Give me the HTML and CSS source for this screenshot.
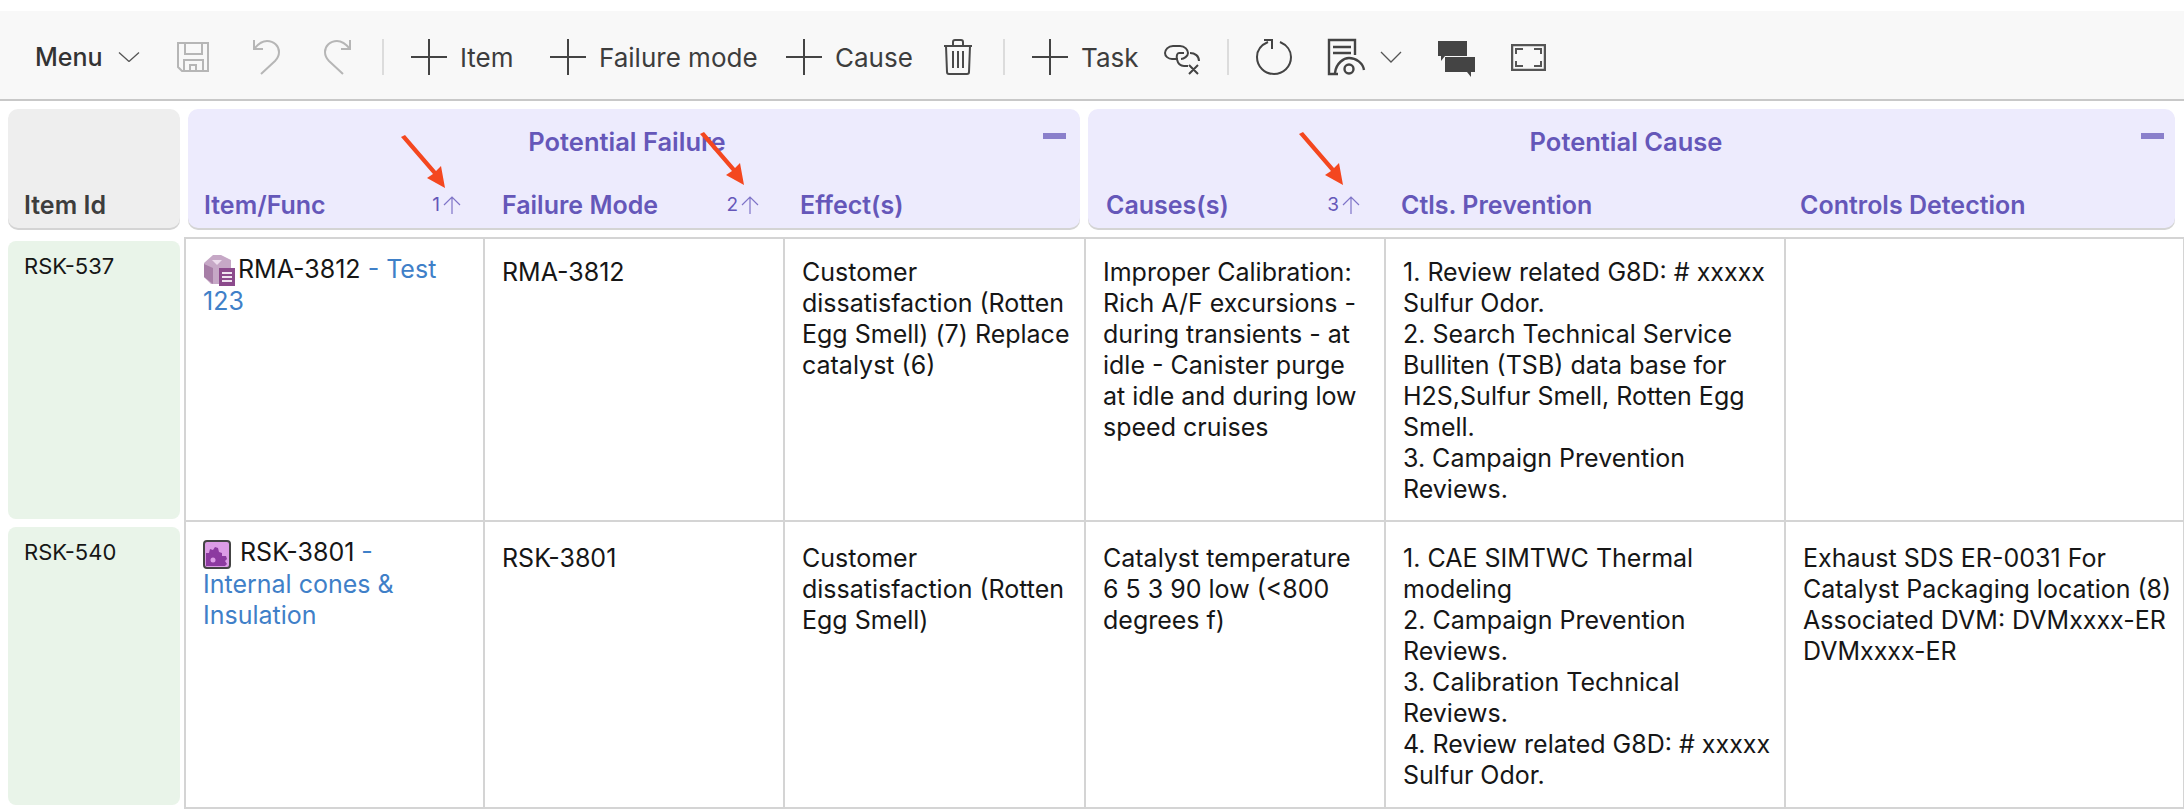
FILE: index.html
```html
<!DOCTYPE html>
<html lang="en">
<head>
<meta charset="utf-8">
<title>Risk analysis</title>
<link rel="stylesheet" href="styles.css">
</head>
<body>
<div class="toolbar">
  <div class="tb w-menu"><span class="tb-menu">Menu</span><svg class="chev chev-menu" viewBox="0 0 22 10"><path d="M1 0.5 11 9.5 21 0.5"/></svg></div>
  <div class="tb w-save"><svg class="ic-save" viewBox="0 0 32 30"><path d="M1 1H31V29H5L1 25Z M8 1V12H25V1 M7 29V18H26V29 M13 29V23H19V29"/></svg></div>
  <div class="tb w-undo"><svg class="ic-hook" viewBox="0 0 28 36"><path d="M2 1V10H11 M2 10C6 5 10 2 15 2C22 2 27 7 27 13C27 17 25 20 23 22L9 35"/></svg></div>
  <div class="tb w-redo"><svg class="ic-hook" viewBox="0 0 28 36"><path d="M26 1V10H17 M26 10C22 5 18 2 13 2C6 2 1 7 1 13C1 17 3 20 5 22L19 35"/></svg></div>
  <div class="tb w-sep"><span class="sep"></span></div>
  <div class="tb w-item"><svg class="ic-plus" viewBox="0 0 36 36"><path d="M18 0V36M0 18H36"/></svg><span class="tb-label">Item</span></div>
  <div class="tb w-failure"><svg class="ic-plus" viewBox="0 0 36 36"><path d="M18 0V36M0 18H36"/></svg><span class="tb-label">Failure mode</span></div>
  <div class="tb w-cause"><svg class="ic-plus" viewBox="0 0 36 36"><path d="M18 0V36M0 18H36"/></svg><span class="tb-label">Cause</span></div>
  <div class="tb w-trash"><svg class="ic-trash" viewBox="0 0 30 36"><path d="M1 7H29 M10 7V3Q10 1 12 1H18Q20 1 20 3V7 M3 7 4 33Q4 35 6 35H24Q26 35 26 33L27 7 M10 12V29 M15 12V29 M20 12V29"/></svg></div>
  <div class="tb w-sep"><span class="sep"></span></div>
  <div class="tb w-task"><svg class="ic-plus" viewBox="0 0 36 36"><path d="M18 0V36M0 18H36"/></svg><span class="tb-label">Task</span></div>
  <div class="tb w-link"><svg class="ic-link" viewBox="0 0 36 30"><path d="M14 14H8C4 14 1 11 1 8S4 1 9 1H16C21 1 24 5 24 8S20 14 17 14 M20 8H15C11 8 12 21 20 21H24 M26 8C31 8 35 11 35 16 M25 20 34 29 M34 20 25 29"/></svg></div>
  <div class="tb w-sep"><span class="sep"></span></div>
  <div class="tb w-refresh"><svg class="ic-plus ic-refresh" viewBox="0 0 36 36"><path d="M24 3C31 6 35 12 35 18C35 28 27 35 18 35S1 28 1 18C1 11 5 6 12 3 M8 1H17 M16 1V10"/></svg></div>
  <div class="tb w-report"><svg class="ic-plus ic-report" viewBox="0 0 36 36"><path d="M10 35H1V1H27V16 M5 8H23 M5 14H23"/><path d="M7 34C8 24 16 19 21 19C28 19 35 24 36 31"/><circle cx="21" cy="30" r="4.500"/></svg><svg class="chev chev-report" viewBox="0 0 22 12"><path d="M1 1 11 11 21 1"/></svg></div>
  <div class="tb w-comments"><svg class="ic-comments" viewBox="0 0 37 32"><path d="M0 0H29V15H7L3 20V15H0Z"/><path d="M7 16H37V31H33V36L29 31H7Z"/></svg></div>
  <div class="tb"><svg class="ic-full" viewBox="0 0 35 27"><path class="full-frame" d="M1 1H34V26H1Z"/><path d="M5 10V5H12 M23 5H30V10 M5 17V22H12 M23 22H30V17"/></svg></div>
</div>

<div class="head">
  <div class="head-id"><span>Item Id</span></div>
  <section class="group group-failure">
    <div class="group-title"><span></span><h2>Potential Failure</h2><span class="minus"></span></div>
    <div class="group-cols">
      <div class="col-h col-a"><span>Item/Func</span><span class="sort">1<svg class="sort-arrow" viewBox="0 0 18 18"><path d="M9 18V1M1 9 9 1 17 9"/></svg></span></div>
      <div class="col-h col-a"><span>Failure Mode</span><span class="sort">2<svg class="sort-arrow" viewBox="0 0 18 18"><path d="M9 18V1M1 9 9 1 17 9"/></svg></span></div>
      <div class="col-h"><span>Effect(s)</span></div>
    </div>
  </section>
  <section class="group group-cause">
    <div class="group-title"><span></span><h2>Potential Cause</h2><span class="minus"></span></div>
    <div class="group-cols">
      <div class="col-h col-b"><span>Causes(s)</span><span class="sort">3<svg class="sort-arrow" viewBox="0 0 18 18"><path d="M9 18V1M1 9 9 1 17 9"/></svg></span></div>
      <div class="col-h col-c"><span>Ctls. Prevention</span></div>
      <div class="col-h"><span>Controls Detection</span></div>
    </div>
  </section>
</div>

<div class="rows">
  <div class="id-cell id-first">RSK-537</div>
  <div class="cell cell-top cell-left cell-name"><svg class="ic-box" viewBox="0 0 32 32"><path class="box-top" d="M1 9 10 1H18L28 6V14L20 30H8L1 23Z"/><path class="box-dot" d="M9 6H19L14 11Z"/><path class="box-side" d="M1 10 10 14V30L1 23Z"/><path class="box-doc" d="M16 14H32V32H16Z"/><path class="box-lines" d="M19 19H29M19 23H29M19 27H29"/></svg>RMA-3812 <a class="lnk">- Test<br>123</a></div>
  <div class="cell cell-top">RMA-3812</div>
  <div class="cell cell-top">Customer<br>dissatisfaction (Rotten<br>Egg Smell) (7) Replace<br>catalyst (6)</div>
  <div class="cell cell-top">Improper Calibration:<br>Rich A/F excursions -<br>during transients - at<br>idle - Canister purge<br>at idle and during low<br>speed cruises</div>
  <div class="cell cell-top">1. Review related G8D: # xxxxx<br>Sulfur Odor.<br>2. Search Technical Service<br>Bulliten (TSB) data base for<br>H2S,Sulfur Smell, Rotten Egg<br>Smell.<br>3. Campaign Prevention<br>Reviews.</div>
  <div class="cell cell-top"></div>

  <div class="id-cell id-second">RSK-540</div>
  <div class="cell cell-second cell-left cell-name"><svg class="ic-gear" viewBox="0 0 28 29"><rect class="gear-bg" x="1" y="1" width="26" height="27" rx="3"/><path class="gear" d="M3 26V13L6 13 7 9 10 10 12 7 15 8 16 12 19 13 19 16 23 16 24 19 22 21 24 24 22 26Z"/><circle class="gear-hole" cx="10" cy="20" r="2.500"/></svg> RSK-3801 <a class="lnk">-<br>Internal cones &amp;<br>Insulation</a></div>
  <div class="cell cell-second">RSK-3801</div>
  <div class="cell cell-second">Customer<br>dissatisfaction (Rotten<br>Egg Smell)</div>
  <div class="cell cell-second">Catalyst temperature<br>6 5 3 90 low (&lt;800<br>degrees f)</div>
  <div class="cell cell-second">1. CAE SIMTWC Thermal<br>modeling<br>2. Campaign Prevention<br>Reviews.<br>3. Calibration Technical<br>Reviews.<br>4. Review related G8D: # xxxxx<br>Sulfur Odor.</div>
  <div class="cell cell-second">Exhaust SDS ER-0031 For<br>Catalyst Packaging location (8)<br>Associated DVM: DVMxxxx-ER<br>DVMxxxx-ER</div>
</div>

<svg class="annotations" viewBox="0 0 2184 810">
  <path class="anno" d="M401 137 405 135 436 171 441 166 445 188 427 178 433 174Z"/>
  <path class="anno" d="M700 134 704 132 735 168 740 163 744 185 726 175 732 171Z"/>
  <path class="anno" d="M1299 134 1303 132 1334 168 1339 163 1343 185 1325 175 1331 171Z"/>
</svg>
</body>
</html>
```

FILE: styles.css
```css
* { box-sizing: border-box; }
html, body { margin: 0; padding: 0; }
body {
  width: 2184px;
  height: 810px;
  overflow: hidden;
  position: relative;
  background: #fff;
  padding-top: 11px;
  font-family: Inter, "Noto Sans", "Liberation Sans", sans-serif;
  color: #161616;
}

/* toolbar */
.toolbar {
  height: 90px;
  background: #f8f8f8;
  border-bottom: 2px solid #c8c8c8;
  padding: 4px 0 0 35px;
  display: flex;
  align-items: center;
}
.tb { display: flex; align-items: center; flex: none; }
.w-menu { width: 142px; }
.w-save { width: 75px; }
.w-undo { width: 72px; }
.w-redo { width: 58px; }
.w-sep { width: 29px; }
.w-item { width: 139px; }
.w-failure { width: 236px; }
.w-cause { width: 157px; }
.w-trash { width: 60px; }
.w-task { width: 132px; }
.w-link { width: 63px; }
.w-refresh { width: 72px; }
.w-report { width: 110px; }
.w-comments { width: 73px; }
.tb-menu { font-size: 25px; font-weight: 500; color: #333; width: 83px; }
.tb-label { font-size: 26px; color: #3d3d3d; margin-left: 13px; white-space: nowrap; }
.sep { display: block; width: 2px; height: 36px; background: #dcdcdc; }
svg { display: block; flex: none; fill: none; }
.chev { width: 22px; stroke: #555; stroke-width: 1.300; }
.chev-menu { height: 10px; }
.chev-report { height: 12px; margin-left: 16px; }
.ic-save { width: 32px; height: 30px; stroke: #b6b6b6; stroke-width: 2; }
.ic-hook { width: 28px; height: 36px; stroke: #b6b6b6; stroke-width: 2; }
.ic-plus { width: 36px; height: 36px; stroke: #444; stroke-width: 2; }
.ic-refresh, .ic-report { overflow: visible; }
.ic-report { stroke-width: 2.400; }
.ic-trash { width: 30px; height: 36px; stroke: #4a4a4a; stroke-width: 2; }
.ic-link { width: 36px; height: 30px; margin-top: 6px; stroke: #444; stroke-width: 2; }
.ic-comments { width: 37px; height: 32px; fill: #444; overflow: visible; }
.ic-full { width: 35px; height: 27px; stroke: #555; stroke-width: 2; }
.full-frame { stroke-width: 2.500; }

/* header */
.head {
  display: flex;
  gap: 8px;
  padding: 8px 0 0 8px;
}
.head-id {
  width: 172px;
  height: 119px;
  background: #eee;
  border-radius: 10px;
  box-shadow: 0 2px 0 #d4d4d4;
  display: flex;
  align-items: flex-end;
  padding: 0 0 7px 16px;
  font-size: 25px;
  line-height: 32px;
  font-weight: 600;
  color: #3d3d3d;
}
.group {
  height: 119px;
  background: #edebfd;
  border-radius: 10px;
  box-shadow: 0 2px 0 #d4d4d4;
  color: #6557b9;
}
.group-failure { width: 892px; padding-left: 16px; }
.group-cause { width: 1087px; padding-left: 18px; }
.group-title {
  display: grid;
  grid-template-columns: 1fr auto 1fr;
  align-items: start;
  padding-top: 18px;
  height: 80px;
}
.group-failure .group-title { margin-left: -16px; padding-right: 14px; }
.group-cause .group-title { margin-left: -18px; padding-right: 11px; }
.group-title h2 {
  margin: 0;
  font-size: 25.500px;
  line-height: 30px;
  font-weight: 600;
}
.minus {
  justify-self: end;
  width: 23px;
  height: 6px;
  margin-top: 6px;
  background: #8a7fcb;
}
.group-cols { display: flex; font-size: 25px; line-height: 32px; font-weight: 600; }
.col-h { display: flex; justify-content: space-between; align-items: center; white-space: nowrap; }
.col-a { width: 298px; padding-right: 41px; }
.col-b { width: 295px; padding-right: 41px; }
.col-c { width: 399px; }
.sort { display: flex; align-items: center; gap: 3px; font-size: 19px; font-weight: 400; }
.sort-arrow { width: 18px; height: 18px; stroke: #7f74c8; stroke-width: 1.200; }

/* rows */
.rows {
  display: grid;
  grid-template-columns: 176px 301px 300px 301px 300px 400px 399px;
  grid-template-rows: 285px 287px;
  margin: 9px 0 0 8px;
  font-size: 25px;
  line-height: 31px;
}
.id-cell {
  background: #e9f4e9;
  border-radius: 8px;
  width: 172px;
  padding: 10px 0 0 16px;
  font-size: 22px;
}
.id-first { margin: 4px 0 3px; }
.id-second { margin: 5px 0 4px; }
.cell {
  border-right: 2px solid #d4d4d4;
  border-bottom: 2px solid #d4d4d4;
  padding: 18px 0 0 17px;
  white-space: nowrap;
}
.cell-top { border-top: 2px solid #d4d4d4; }
.cell-second { padding-top: 21px; }
.cell-left { border-left: 2px solid #d4d4d4; }
.cell-name { padding-top: 15px; }
.cell-name svg { display: inline-block; vertical-align: -8px; }
.lnk { color: #3f80c8; }
.ic-box { width: 32px; height: 32px; margin-right: 3px; }
.box-top { fill: #c6a8c6; }
.box-dot { fill: #ecdcec; }
.box-side { fill: #a77ea7; }
.box-doc { fill: #8c4a8c; }
.box-lines { stroke: #f0e4f0; stroke-width: 2; }
.ic-gear { width: 28px; height: 29px; margin-right: 2px; }
.gear-bg { fill: #dc9ce6; stroke: #444; stroke-width: 2; }
.gear { fill: #8c3aa0; }
.gear-hole { fill: #dc9ce6; }

/* red annotation arrows drawn over the page */
.annotations {
  position: absolute;
  top: 0;
  left: 0;
  width: 2184px;
  height: 810px;
  pointer-events: none;
}
.anno { fill: #f4471f; }
```
